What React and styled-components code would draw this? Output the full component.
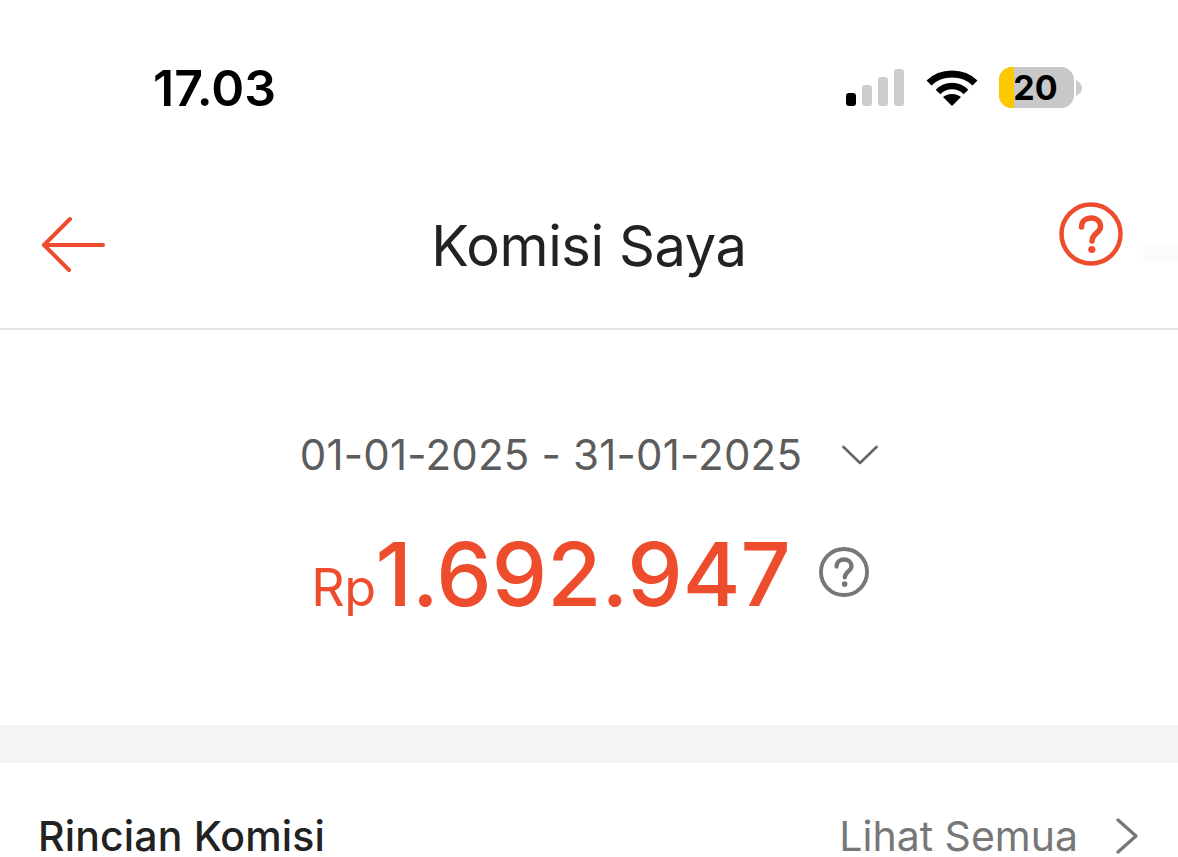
import React from "react";
import styled, { createGlobalStyle } from "styled-components";

const GlobalStyle = createGlobalStyle`
  html, body {
    margin: 0;
    padding: 0;
    background: #fff;
    overflow: hidden;
  }
  body {
    font-family: Inter, "Liberation Sans", sans-serif;
  }
`;

const Screen = styled.div`
  width: 1178px;
  height: 857px;
  overflow: hidden;
  background: #fff;
  display: flex;
  flex-direction: column;
  & > * {
    flex-shrink: 0;
  }
`;

const StatusBar = styled.div`
  height: 176px;
  box-sizing: border-box;
  padding: 59px 96px 0 153px;
  display: flex;
  justify-content: space-between;
  align-items: flex-start;
`;

const Clock = styled.div`
  font-size: 50px;
  line-height: 58px;
  font-weight: 600;
  color: #000;
`;

const StatusIcons = styled.div`
  display: flex;
  align-items: center;
  padding-top: 8px;
`;

const WifiSlot = styled.div`
  display: flex;
  margin: 0 21px 0 20px;
`;

const Battery = styled.div`
  position: relative;
  width: 75px;
  height: 41px;
  border-radius: 13px;
  overflow: hidden;
  background: #c8c8c8;
  display: flex;
  align-items: center;
  justify-content: center;
  font-size: 34px;
  font-weight: 700;
  color: #000;
`;

const BatteryFill = styled.div`
  position: absolute;
  left: 0;
  top: 0;
  bottom: 0;
  width: 15px;
  background: #fcc800;
`;

const BatteryLabel = styled.span`
  position: relative;
  line-height: 41px;
  margin-left: -2px;
`;

const BatteryWrap = styled.div`
  display: flex;
  align-items: center;
  gap: 2px;
`;

const NavBar = styled.div`
  height: 154px;
  box-sizing: border-box;
  padding: 0 55px 0 40px;
  border-bottom: 2px solid #e4e4e4;
  display: flex;
  align-items: center;
  justify-content: space-between;
  position: relative;
`;

const NavTitle = styled.div`
  position: absolute;
  left: 0;
  right: 0;
  top: 37px;
  text-align: center;
  font-size: 56px;
  line-height: 66px;
  color: #222;
  letter-spacing: -0.4px;
`;

const NavIcon = styled.div`
  display: flex;
  margin-bottom: ${(p) => p.$lift}px;
`;

const Smudge = styled.div`
  position: absolute;
  right: 0;
  top: 69px;
  width: 35px;
  height: 16px;
  background: #fbfbfb;
`;

const Summary = styled.section`
  height: 395px;
  box-sizing: border-box;
  padding-top: 96px;
  display: flex;
  flex-direction: column;
  align-items: center;
`;

const DateRow = styled.div`
  display: flex;
  align-items: center;
  gap: 40px;
  font-size: 42px;
  line-height: 58px;
  color: #5c5c5c;
  letter-spacing: 0.2px;
`;

const AmountRow = styled.div`
  display: flex;
  align-items: center;
  margin-top: 36px;
  padding-left: 2px;
  gap: 28px;
`;

const Amount = styled.div`
  color: #ee4d2d;
  font-size: 88px;
  line-height: 108px;
  font-weight: 500;
  display: flex;
  align-items: baseline;
`;

const Currency = styled.span`
  font-size: 52px;
  font-weight: 400;
  letter-spacing: -0.5px;
`;

const AmountHelp = styled.div`
  display: flex;
  margin-bottom: 18px;
`;

const Divider = styled.div`
  height: 38px;
  background: #f4f4f4;
`;

const SectionRow = styled.div`
  display: flex;
  align-items: center;
  justify-content: space-between;
  padding: 52px 40px 0 38px;
`;

const SectionTitle = styled.div`
  font-size: 41px;
  line-height: 42px;
  font-weight: 500;
  color: #222;
  letter-spacing: 0.15px;
`;

const SeeAll = styled.div`
  display: flex;
  align-items: center;
  gap: 38px;
  font-size: 41px;
  line-height: 42px;
  color: #777;
`;

const Signal = () => (
  <svg width="60" height="37" viewBox="0 0 60 37">
    <rect x="0" y="24" width="10" height="13" rx="3" fill="#000" />
    <rect x="16" y="16" width="10" height="21" rx="3" fill="#ccc" />
    <rect x="32" y="8" width="10" height="29" rx="3" fill="#ccc" />
    <rect x="48" y="0" width="10" height="37" rx="3" fill="#ccc" />
  </svg>
);

const Wifi = () => (
  <svg width="52" height="37" viewBox="0 0 52 37" fill="none">
    <path d="M3 14C15 2 37 2 49 14" stroke="#000" strokeWidth="7" />
    <path d="M12 23C20 15 32 15 40 23" stroke="#000" strokeWidth="6.5" />
    <path d="M17 28C22 24 30 24 35 28L26 37Z" fill="#000" />
  </svg>
);

const BackArrow = () => (
  <svg width="66" height="60" viewBox="0 0 66 60" fill="none" stroke="#ee4d2d" strokeWidth="4" strokeLinecap="round" strokeLinejoin="round">
    <path d="M30 3L4 29L29 54" />
    <path d="M4 29H63" />
  </svg>
);

const HelpIcon = ({ size, color, weight }) => (
  <svg width={size} height={size} viewBox="0 0 64 64" fill="none">
    <circle cx="32" cy="32" r="29.5" stroke={color} strokeWidth={weight} />
    <path d="M22.5 25C22.5 19 27 16 32 16C37.5 16 41.5 19.5 41.5 24.5C41.5 31 33 31.5 33 39" stroke={color} strokeWidth="5.5" strokeLinecap="round" />
    <circle cx="32.8" cy="47.5" r="3.6" fill={color} />
  </svg>
);

const Chevron = () => (
  <svg width="36" height="20" viewBox="0 0 36 20" fill="none" stroke="#666" strokeWidth="2.6" strokeLinecap="round" strokeLinejoin="round">
    <path d="M1.5 2L18 18L34.5 2" />
  </svg>
);

const ChevronRight = () => (
  <svg width="22" height="36" viewBox="0 0 22 36" fill="none" stroke="#777" strokeWidth="3.2" strokeLinecap="round" strokeLinejoin="round">
    <path d="M2 2L20 18L2 34" />
  </svg>
);

const App = () => {
  return (
    <Screen>
      <GlobalStyle />
      <StatusBar>
        <Clock>17.03</Clock>
        <StatusIcons>
          <Signal />
          <WifiSlot>
            <Wifi />
          </WifiSlot>
          <BatteryWrap>
            <Battery>
              <BatteryFill />
              <BatteryLabel>20</BatteryLabel>
            </Battery>
            <svg width="6" height="16" viewBox="0 0 6 16">
              <path d="M0 0C4 2 6 5 6 8C6 11 4 14 0 16Z" fill="#ccc" />
            </svg>
          </BatteryWrap>
        </StatusIcons>
      </StatusBar>
      <NavBar>
        <NavIcon $lift={12}>
          <BackArrow />
        </NavIcon>
        <NavTitle>Komisi Saya</NavTitle>
        <NavIcon $lift={36}>
          <HelpIcon size={64} color="#ee4d2d" weight={4.5} />
        </NavIcon>
        <Smudge />
      </NavBar>
      <Summary>
        <DateRow>
          <span>01-01-2025 - 31-01-2025</span>
          <Chevron />
        </DateRow>
        <AmountRow>
          <Amount>
            <Currency>Rp</Currency>1.692.947
          </Amount>
          <AmountHelp>
            <HelpIcon size={50} color="#777" weight={5} />
          </AmountHelp>
        </AmountRow>
      </Summary>
      <Divider />
      <SectionRow>
        <SectionTitle>Rincian Komisi</SectionTitle>
        <SeeAll>
          <span>Lihat Semua</span>
          <ChevronRight />
        </SeeAll>
      </SectionRow>
    </Screen>
  );
};

export default App;
